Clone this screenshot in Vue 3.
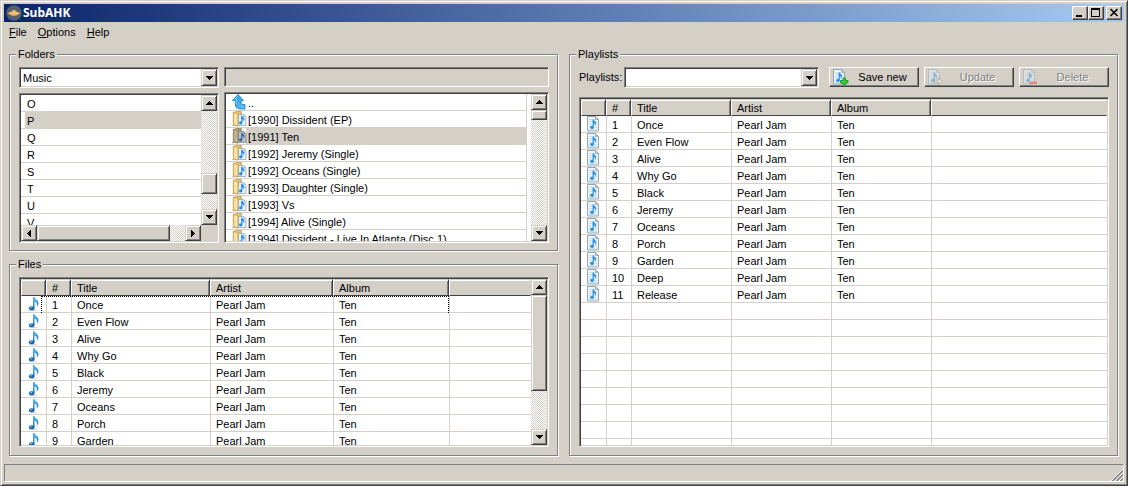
<script setup>
import { ref } from 'vue'

const root = ref('Music')
const playlist = ref('')
const path = ref('')

const letters = ['O', 'P', 'Q', 'R', 'S', 'T', 'U', 'V']
const selectedLetter = 'P'

const albums = [
  '[1990] Dissident (EP)',
  '[1991] Ten',
  '[1992] Jeremy (Single)',
  '[1992] Oceans (Single)',
  '[1993] Daughter (Single)',
  '[1993] Vs',
  '[1994] Alive (Single)',
  '[1994] Dissident - Live In Atlanta (Disc 1)',
]
const selectedAlbum = '[1991] Ten'

const tracks = [
  'Once', 'Even Flow', 'Alive', 'Why Go', 'Black', 'Jeremy',
  'Oceans', 'Porch', 'Garden', 'Deep', 'Release',
].map((title, i) => ({ no: i + 1, title, artist: 'Pearl Jam', album: 'Ten' }))

const menus = ['File', 'Options', 'Help']
const actions = [
  { label: 'Save new', icon: 'save', disabled: false },
  { label: 'Update', icon: 'update', disabled: true },
  { label: 'Delete', icon: 'delete', disabled: true },
]
const blankRows = 9
</script>

<template>
  <div class="window">
    <svg class="defs" aria-hidden="true">
      <defs>
        <linearGradient id="blue" x1="0" y1="0" x2="0" y2="1">
          <stop offset="0" stop-color="#5cbcf4" />
          <stop offset="1" stop-color="#1a74c8" />
        </linearGradient>
        <linearGradient id="gold" x1="0" y1="0" x2="1" y2="0">
          <stop offset="0" stop-color="#f6dc94" />
          <stop offset="1" stop-color="#e2b860" />
        </linearGradient>
        <linearGradient id="sky" x1="0" y1="0" x2="1" y2="1">
          <stop offset="0" stop-color="#2c98dc" />
          <stop offset="1" stop-color="#5cc8fa" />
        </linearGradient>
        <symbol id="note" viewBox="0 0 16 16">
          <ellipse cx="8" cy="14.500" rx="4.500" ry="0.800" fill="#d8dce0" />
          <path d="M8 1h1.500c.4 2.300 4.200 3.200 4 6.300-.1 1.400-.9 2.500-2 3.400 1-2.500.4-4.200-2-5.100V12H8z" fill="url(#blue)" />
          <ellipse cx="6.700" cy="12.300" rx="2.800" ry="2" fill="#1c66a8" />
          <ellipse cx="6.100" cy="11.700" rx="1.400" ry="0.800" fill="#62b4e8" />
        </symbol>
        <symbol id="page" viewBox="0 0 16 16">
          <path d="M2.500 .5h8l3 3v11.500h-11z" fill="#eef5fa" stroke="#93a7b3" />
          <path d="M4 3.500h6M4 5.500h8M4 7.500h8M4 9.500h8M4 11.500h8M4 13.500h8" stroke="#cddde8" />
          <path d="M10.500 .5v3h3z" fill="#b9cbd6" stroke="#8a9ca8" stroke-width=".6" />
          <path d="M7.600 3.500h1.200c.2 1.700 2.500 2 2.300 4.200-.1.900-.5 1.400-1 1.900.3-1.500 0-2.300-1.300-2.700v4.300c0 2.400-3.600 2.400-3.600.4 0-1.500 1.400-1.800 2.400-1.500z" fill="#2090e8" />
        </symbol>
        <symbol id="folder" viewBox="0 0 16 16">
          <path d="M0 14h5v1.200H0z" fill="#c8c4bc" />
          <path d="M1.400 1.400 5 .5h4.300v13l-3 1-4.900-1z" fill="url(#gold)" stroke="#c49a48" stroke-width=".8" />
          <path d="M6.400 3.500h5.300l2.300 2.300v8.700H6.400z" fill="#e6f2fb" stroke="#8fa9bb" stroke-width=".8" />
          <path d="M11.700 3.500v2.300H14z" fill="#8fa9bb" />
          <path d="M1.400 1.400 6 2.600v12.600l-4.600-1.700z" fill="#f8e2a0" stroke="#bf9545" stroke-width=".7" />
          <path d="M9.200 4.800h1.200c.2 1.400 2.200 1.900 2.100 3.800-.1.800-.5 1.400-1 1.800.3-1.400 0-2-1.100-2.400v3.700c0 2.200-3.300 2.200-3.300.3 0-1.300 1.100-1.700 2.100-1.300z" fill="#1c86f0" />
        </symbol>
        <symbol id="up" viewBox="0 0 16 16">
          <path d="M6 .5 11.600 6.400H9.200v2.800c0 .9.400 1.300 1.300 1.300H13V15H8.600C5.200 15 3.300 13.200 3.300 10V6.400H.4z" fill="url(#sky)" stroke="#1c74b0" stroke-width=".8" />
          <path d="M4.300 10V5.400H2.700L6 1.900" fill="none" stroke="#8ad6f8" stroke-width=".8" />
        </symbol>
        <symbol id="save" viewBox="0 0 16 16">
          <use href="#page" x="-2" width="16" height="16" />
          <path d="M10 9h2.500v2.500H15V14h-2.500v2H10v-2H7.500v-2.500H10z" fill="#35d435" stroke="#148a1c" stroke-width=".8" />
        </symbol>
        <symbol id="update" viewBox="0 0 16 16">
          <use href="#page" x="-2" width="16" height="16" />
          <path d="M6.500 11h4V8.500l4 4-4 3.500v-2.500h-4z" fill="#f4f4f4" stroke="#777" stroke-width=".8" />
        </symbol>
        <symbol id="delete" viewBox="0 0 16 16">
          <use href="#page" x="-2" width="16" height="16" />
          <path d="M6.500 12.500h7.500v2.500H6.500z" fill="#f03030" />
        </symbol>
        <symbol id="arrow-up" viewBox="0 0 7 4"><path d="M3 0h1v1h1v1h1v1h1v1H0V3h1V2h1V1h1z" /></symbol>
        <symbol id="arrow-down" viewBox="0 0 7 4"><path d="M3 4h1V3h1V2h1V1h1V0H0v1h1v1h1v1h1z" /></symbol>
        <symbol id="arrow-left" viewBox="0 0 4 7"><path d="M0 3v1h1v1h1v1h1v1h1V0H3v1H2v1H1v1z" /></symbol>
        <symbol id="arrow-right" viewBox="0 0 4 7"><path d="M4 3v1H3v1H2v1H1v1H0V0h1v1h1v1h1v1z" /></symbol>
      </defs>
    </svg>

    <header class="titlebar">
      <svg class="icon" viewBox="0 0 16 16" aria-hidden="true">
        <circle cx="8" cy="8" r="7.800" fill="#55606e" />
        <path d="M1.500 8.200 4 7l2-.6.500-1.400h3l.5 1.400 2.500.9 2 .9-2 1.300-2.500 1.200H6L3.500 9.500z" fill="#e6ae62" />
        <path d="M4 8h8" stroke="#f8d498" />
      </svg>
      <h1>SubAHK</h1>
      <div class="controls">
        <button class="bevel" aria-label="Minimize">
          <svg width="12" height="10" viewBox="0 0 12 10"><path d="M2 7h6v2H2z" /></svg>
        </button>
        <button class="bevel" aria-label="Maximize">
          <svg width="12" height="10" viewBox="0 0 12 10"><path fill-rule="evenodd" d="M1 0h9v9H1zM2 2v6h7V2z" /></svg>
        </button>
        <button class="bevel close" aria-label="Close">
          <svg width="12" height="10" viewBox="0 0 12 10"><path d="m2.500 1 7 7m0-7-7 7" stroke="#000" stroke-width="1.600" /></svg>
        </button>
      </div>
    </header>

    <nav class="menubar">
      <button v-for="m in menus" :key="m"><u>{{ m[0] }}</u>{{ m.slice(1) }}</button>
    </nav>

    <main class="content">
      <div class="left">
        <fieldset class="folders">
          <legend>Folders</legend>
          <div class="browser">
            <div class="stack">
              <div class="sunken combo">
                <select v-model="root" aria-label="Root folder"><option>Music</option></select>
                <span class="bevel drop"><svg width="7" height="4"><use href="#arrow-down" /></svg></span>
              </div>
              <div class="sunken list letter-list">
                <ul class="letters">
                  <li v-for="l in letters" :key="l" :class="{ selected: l === selectedLetter }"><span>{{ l }}</span></li>
                </ul>
                <div class="vbar">
                  <button class="bevel" aria-label="Scroll up"><svg width="7" height="4"><use href="#arrow-up" /></svg></button>
                  <div class="track mid"><div class="bevel thumb"></div></div>
                  <button class="bevel" aria-label="Scroll down"><svg width="7" height="4"><use href="#arrow-down" /></svg></button>
                </div>
                <div class="hbar">
                  <button class="bevel" aria-label="Scroll left"><svg width="4" height="7"><use href="#arrow-left" /></svg></button>
                  <div class="track"><div class="bevel thumb"></div></div>
                  <button class="bevel" aria-label="Scroll right"><svg width="4" height="7"><use href="#arrow-right" /></svg></button>
                </div>
                <div class="corner"></div>
              </div>
            </div>
            <div class="stack">
              <input v-model="path" class="path" type="text" aria-label="Path" readonly />
              <div class="sunken list album-list">
                <ul class="albums">
                  <li><svg class="icon"><use href="#up" /></svg><span>..</span></li>
                  <li v-for="a in albums" :key="a" :class="{ selected: a === selectedAlbum }">
                    <svg class="icon"><use href="#folder" /></svg><span>{{ a }}</span>
                  </li>
                </ul>
                <div class="vbar">
                  <button class="bevel" aria-label="Scroll up"><svg width="7" height="4"><use href="#arrow-up" /></svg></button>
                  <div class="track short"><div class="bevel thumb"></div></div>
                  <button class="bevel" aria-label="Scroll down"><svg width="7" height="4"><use href="#arrow-down" /></svg></button>
                </div>
              </div>
            </div>
          </div>
        </fieldset>

        <fieldset class="files">
          <legend>Files</legend>
          <div class="sunken list file-list">
            <div class="viewport">
              <table>
                <colgroup><col class="c-icon" /><col class="c-no" /><col class="c-title" /><col class="c-artist" /><col class="c-album" /><col /></colgroup>
                <thead><tr><th></th><th>#</th><th>Title</th><th>Artist</th><th>Album</th><th class="last"></th></tr></thead>
                <tbody>
                  <tr v-for="t in tracks" :key="t.no">
                    <td><svg class="icon"><use href="#note" /></svg></td>
                    <td>{{ t.no }}</td><td>{{ t.title }}</td><td>{{ t.artist }}</td><td>{{ t.album }}</td><td></td>
                  </tr>
                </tbody>
              </table>
              <div class="focus"></div>
            </div>
            <div class="vbar">
              <button class="bevel" aria-label="Scroll up"><svg width="7" height="4"><use href="#arrow-up" /></svg></button>
              <div class="track long"><div class="bevel thumb"></div></div>
              <button class="bevel" aria-label="Scroll down"><svg width="7" height="4"><use href="#arrow-down" /></svg></button>
            </div>
          </div>
        </fieldset>
      </div>

      <fieldset class="playlists">
        <legend>Playlists</legend>
        <div class="toolbar">
          <label for="playlist">Playlists:</label>
          <div class="sunken combo">
            <select id="playlist" v-model="playlist"><option value=""></option></select>
            <span class="bevel drop"><svg width="7" height="4"><use href="#arrow-down" /></svg></span>
          </div>
          <div class="actions">
            <button v-for="a in actions" :key="a.label" class="action" :disabled="a.disabled">
              <svg class="icon"><use :href="'#' + a.icon" /></svg><span>{{ a.label }}</span>
            </button>
          </div>
        </div>
        <div class="sunken list play-list">
          <div class="viewport">
            <table>
              <colgroup><col class="c-icon" /><col class="c-no" /><col class="c-even" /><col class="c-even" /><col class="c-even" /><col /></colgroup>
              <thead><tr><th></th><th>#</th><th>Title</th><th>Artist</th><th>Album</th><th class="last"></th></tr></thead>
              <tbody>
                <tr v-for="t in tracks" :key="t.no">
                  <td><svg class="icon"><use href="#page" /></svg></td>
                  <td>{{ t.no }}</td><td>{{ t.title }}</td><td>{{ t.artist }}</td><td>{{ t.album }}</td><td></td>
                </tr>
                <tr v-for="n in blankRows" :key="'b' + n"><td></td><td></td><td></td><td></td><td></td><td></td></tr>
              </tbody>
            </table>
          </div>
        </div>
      </fieldset>
    </main>

    <footer class="status">
      <svg width="12" height="12" viewBox="0 0 12 12" aria-hidden="true">
        <path d="M0 12 12 0v12z" fill="#d4d0c8" />
        <path d="M0 12 12 0M4 12l8-8M8 12l4-4" stroke="#fff" />
        <path d="M1.500 12 12 1.500M5.500 12 12 5.500M9.500 12 12 9.500" stroke="#808080" stroke-width="1.500" />
      </svg>
    </footer>
  </div>
</template>

<style>
html, body, #app { height: 100%; }
body { margin: 0; background: #d4d0c8; overflow: hidden; }
</style>

<style scoped>
* { box-sizing: border-box; }
.window {
  height: 100vh;
  display: flex;
  flex-direction: column;
  padding: 3px;
  background: #d4d0c8;
  border: 1px solid;
  border-color: #d4d0c8 #404040 #404040 #d4d0c8;
  box-shadow: inset 1px 1px #fff, inset -1px -1px #808080;
  font: 11px/16px "Liberation Sans", Arial, sans-serif;
  color: #000;
}
.defs { position: absolute; width: 0; height: 0; }
button, select, input { font: inherit; color: inherit; margin: 0; padding: 0; border-radius: 0; outline: none; }
svg { display: block; flex: none; }
.icon { width: 16px; height: 16px; }

.bevel {
  display: flex;
  align-items: center;
  justify-content: center;
  background: #d4d0c8;
  border: 1px solid;
  border-color: #d4d0c8 #404040 #404040 #d4d0c8;
  box-shadow: inset 1px 1px #fff, inset -1px -1px #808080;
}
.sunken {
  background: #fff;
  border: 1px solid;
  border-color: #808080 #fff #fff #808080;
  box-shadow: inset 1px 1px #404040, inset -1px -1px #d4d0c8;
  padding: 1px;
}

.titlebar {
  flex: none;
  height: 18px;
  display: flex;
  align-items: center;
  padding: 0 2px;
  background: linear-gradient(90deg, #0a246a, #a6caf0);
}
.titlebar h1 {
  flex: 1;
  margin: 0 0 0 1px;
  color: #fff;
  font: bold 12px/16px "Noto Sans", sans-serif;
}
.controls { display: flex; }
.controls .bevel { width: 16px; height: 14px; border-color: #fff #404040 #404040 #fff; box-shadow: inset -1px -1px #808080; }
.controls .close { margin-left: 2px; }

.menubar { flex: none; height: 20px; display: flex; gap: 11px; padding: 0 5px; align-items: center; }
.menubar button { border: 0; background: none; }

.content {
  flex: 1;
  min-height: 0;
  display: grid;
  grid-template-columns: 1fr 1fr;
  gap: 11px;
  padding: 6px 6px 8px 5px;
}
.left { display: flex; flex-direction: column; gap: 7px; min-height: 0; min-width: 0; }
fieldset {
  display: flex;
  flex-direction: column;
  min-width: 0;
  min-height: 0;
  margin: 0;
  padding: 7px 8px 8px 9px;
  border: 1px solid #808080;
  box-shadow: 1px 1px #fff, inset 1px 1px #fff;
}
.folders { flex: none; padding-bottom: 7px; }
.files { flex: 1; }
legend { margin-left: -3px; padding: 0 2px; line-height: 12px; background: #d4d0c8; }

.browser { display: grid; grid-template-columns: 200px 1fr; gap: 5px; height: 176px; }
.stack { display: flex; flex-direction: column; gap: 5px; min-width: 0; min-height: 0; }
.stack .list { flex: 1; min-height: 0; }

.combo { display: flex; height: 21px; }
.combo select {
  flex: 1;
  min-width: 0;
  appearance: none;
  border: 0;
  background: #fff;
  padding: 0 2px;
}
.drop { width: 16px; pointer-events: none; }
.path {
  height: 20px;
  background: #d4d0c8;
  border: 1px solid;
  border-color: #808080 #fff #fff #808080;
  box-shadow: inset 1px 1px #404040;
}

.list { display: grid; grid-template-columns: 1fr 16px; overflow: hidden; }
.letter-list { grid-template-rows: minmax(0, 1fr) 16px; }
.album-list, .file-list { grid-template-rows: minmax(0, 1fr); }
ul { list-style: none; margin: 0; padding: 0; overflow: hidden; }
li { display: flex; height: 17px; border-bottom: 1px solid #d4d0c8; white-space: nowrap; }
li span { flex: 1; padding-top: 2px; line-height: 15px; }
.letters li { padding-left: 4px; }
.letters span { padding-left: 2px; }
.letters .selected span, .albums .selected span { background: #d4d0c8; }
.albums { border-right: 4px solid #fff; }
.albums li { padding-left: 6px; border-right: 1px solid #d4d0c8; }
.albums li span { margin-left: -2px; padding-left: 2px; }
.albums .selected .icon { filter: brightness(0.8) saturate(0.6); }

.vbar { display: flex; flex-direction: column; min-height: 0; }
.hbar { display: flex; min-width: 0; }
.vbar button, .hbar button { flex: none; width: 16px; height: 16px; }
.corner { background: #d4d0c8; }
.track {
  flex: 1;
  min-height: 0;
  display: flex;
  flex-direction: column;
  background: repeating-conic-gradient(#fff 0 25%, #d4d0c8 0 50%) 0 0 / 2px 2px;
}
.hbar .track { flex-direction: row; }
.hbar .thumb { width: 90%; }
.mid { padding-top: 62px; }
.mid .thumb { height: 21px; }
.short .thumb { height: 10px; }
.long .thumb { height: 72%; }

.files .list, .playlists .list { flex: 1; min-height: 0; }
.play-list { grid-template-columns: 1fr; grid-template-rows: minmax(0, 1fr); }
.viewport { position: relative; overflow: hidden; min-width: 0; }
table { width: 100%; table-layout: fixed; border-collapse: separate; border-spacing: 0; }
.c-icon, .c-no { width: 25px; }
.c-title { width: 139px; }
.c-artist { width: 123px; }
.c-album { width: 116px; }
.c-even { width: 100px; }
th {
  height: 17px;
  padding: 2px 0 0 5px;
  font-weight: normal;
  text-align: left;
  line-height: 13px;
  background: #d4d0c8;
  border: 1px solid;
  border-color: #d4d0c8 #404040 #404040 #fff;
  box-shadow: inset 0 1px #fff, inset -1px 0 #808080;
}
th.last { border-right-color: #d4d0c8; box-shadow: inset 0 1px #fff; }
td {
  height: 17px;
  padding: 2px 0 0 5px;
  line-height: 14px;
  white-space: nowrap;
  border-left: 1px solid #d4d0c8;
  border-bottom: 1px solid #d4d0c8;
}
td:first-child { border-left: 0; padding: 0 0 0 4px; }
.focus {
  position: absolute;
  left: 20px;
  top: 17px;
  width: 408px;
  height: 17px;
  border: 1px dotted #000;
  border-bottom: 0;
}

.toolbar { display: flex; align-items: flex-start; margin-bottom: 9px; }
.toolbar label { width: 45px; line-height: 20px; white-space: nowrap; }
.toolbar .combo { flex: 1; min-width: 0; }
.actions { display: flex; gap: 5px; margin-left: 10px; }
.action {
  display: flex;
  align-items: center;
  width: 90px;
  height: 20px;
  padding: 0 2px 0 3px;
  background: #d4d0c8;
  border: 1px solid;
  border-color: #fff #404040 #404040 #fff;
  box-shadow: inset -1px -1px #808080;
}
.action span { flex: 1; text-align: center; }
.action:disabled { color: #808080; text-shadow: 1px 1px #fff; }
.action:disabled .icon { opacity: 0.45; }

.status {
  flex: none;
  height: 18px;
  display: flex;
  justify-content: flex-end;
  align-items: flex-end;
  border: 1px solid;
  border-color: #808080 #fff #fff #808080;
}
</style>
